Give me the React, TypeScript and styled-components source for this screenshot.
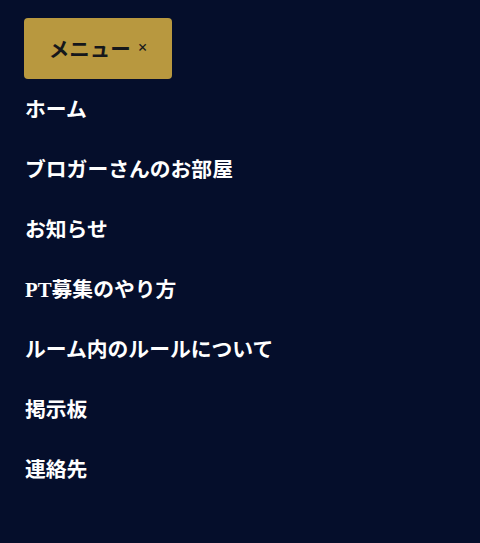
import React from "react";
import styled, { createGlobalStyle } from "styled-components";

const Global = createGlobalStyle`
  html, body {
    margin: 0;
    padding: 0;
    background: #050e2b;
  }
  body {
    font-family: "Liberation Serif", "Noto Sans CJK JP", serif;
  }
`;

const Page = styled.div`
  min-height: 543px;
  background: #050e2b;
  padding: 18px 24px 0;
  box-sizing: border-box;
`;

const MenuButton = styled.button`
  display: flex;
  align-items: center;
  justify-content: center;
  gap: 7px;
  width: 148px;
  height: 61px;
  padding: 0 0 2px;
  border: none;
  border-radius: 4px;
  background: #b8983f;
  color: #15171b;
  font-family: "Liberation Serif", "Noto Sans CJK JP", serif;
  font-size: 20.5px;
  font-weight: 700;
  cursor: pointer;
`;

const Close = styled.span`
  font-size: 17px;
  font-weight: 700;
  margin-top: 1px;
`;

const Nav = styled.nav`
  display: flex;
  flex-direction: column;
`;

const Item = styled.a`
  display: flex;
  align-items: center;
  height: 60px;
  padding: 0 0 3px 1px;
  box-sizing: border-box;
  color: #ffffff;
  font-size: 20.8px;
  font-weight: 700;
  text-decoration: none;
`;

const items = [
  "ホーム",
  "ブロガーさんのお部屋",
  "お知らせ",
  "PT募集のやり方",
  "ルーム内のルールについて",
  "掲示板",
  "連絡先",
];

export default function App() {
  return (
    <>
      <Global />
      <Page>
        <MenuButton>
          メニュー<Close>×</Close>
        </MenuButton>
        <Nav>
          {items.map((t) => (
            <Item key={t} href="#">
              {t}
            </Item>
          ))}
        </Nav>
      </Page>
    </>
  );
}
